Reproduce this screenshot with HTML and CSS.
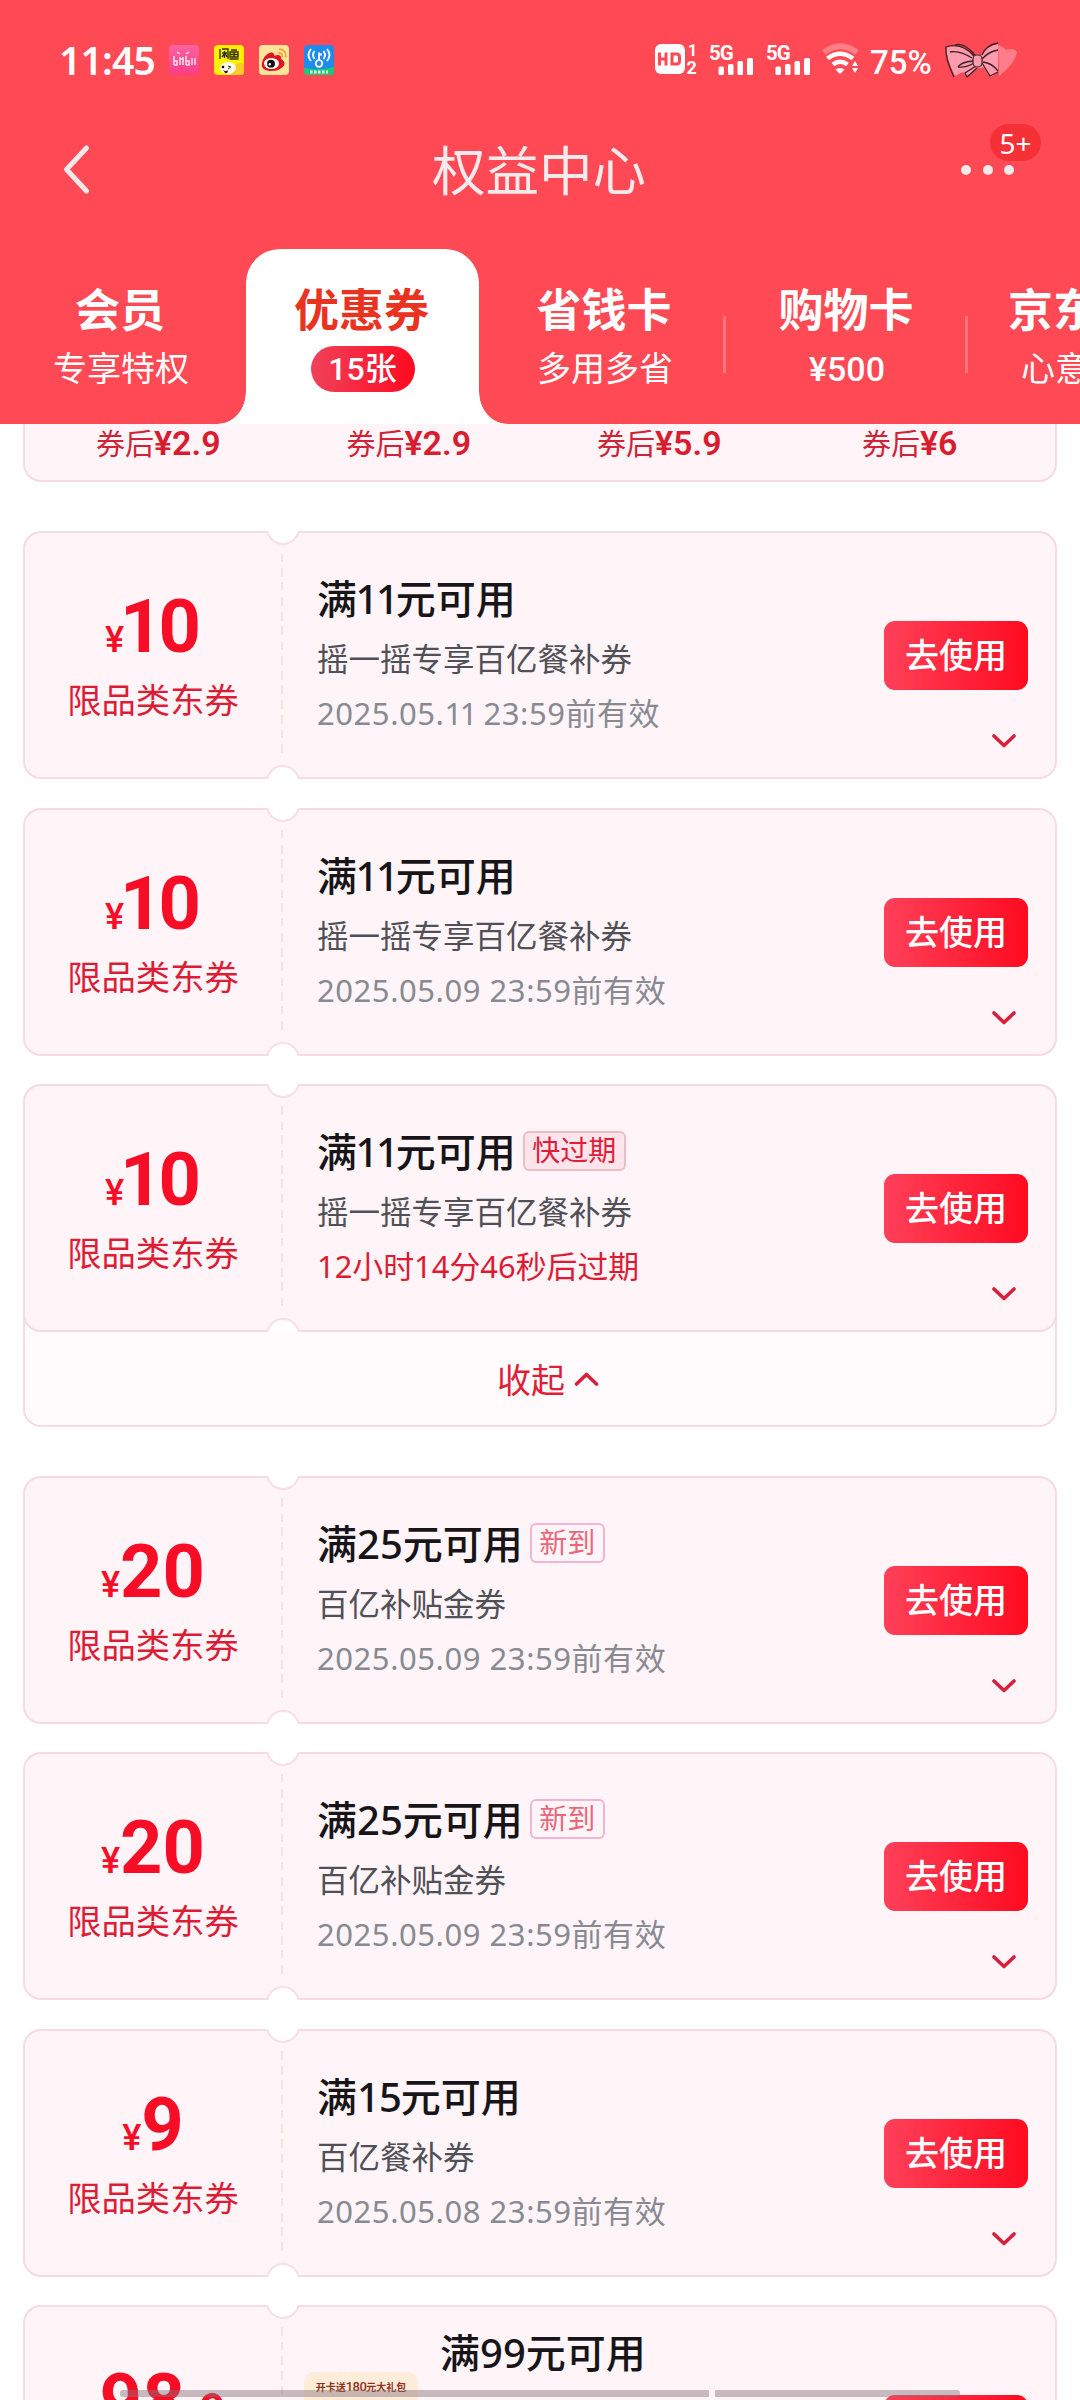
FILE: index.html
```html
<!DOCTYPE html>
<html lang="zh-CN">
<head>
<meta charset="utf-8">
<title>权益中心</title>
<link rel="stylesheet" href="styles.css">
</head>
<body>
<svg class="defs" aria-hidden="true">
  <symbol id="down" viewBox="0 0 24 14"><path d="M2 2 L12 11.5 L22 2" fill="none" stroke="#d9203a" stroke-width="3.6" stroke-linecap="round" stroke-linejoin="round"/></symbol>
  <symbol id="signal" viewBox="0 0 46 32"><g fill="#fff"><rect x="9.500" y="22.500" width="5.500" height="8.500" rx="1.500"/><rect x="19" y="20" width="5.500" height="11" rx="1.500"/><rect x="28.500" y="17" width="5.500" height="14" rx="1.500"/><rect x="38" y="14" width="6" height="17" rx="1.500"/></g></symbol>
</svg>
<div class="screen">
  <header class="header">
    <div class="status">
      <span class="time">11:45</span>
      <svg class="app" viewBox="0 0 30 30"><defs><linearGradient id="pk" x2="0" y2="1"><stop stop-color="#ff62a0"/><stop offset="1" stop-color="#ff3d83"/></linearGradient></defs><rect width="30" height="30" rx="4" fill="url(#pk)"/><path d="M5 11V20M5 16h3v4H5M11 12V20M11 14h3M14 12v8M17 11v9M17 16h3v4h-3M23 13v7M26 13v7M8 7l3 2M20 7l-3 2" stroke="#ffe3ef" stroke-width="1.500" fill="none"/></svg>
      <svg class="app" viewBox="0 0 30 30"><rect width="30" height="30" rx="4" fill="#fff000"/><path d="M17 30C18 17 30 15 30 22v4q0 4-4 4z" fill="#ffc928"/><path d="M6 4v10M8 4h6v10M8 8h5M10.500 6v7M8 12l3-4 2 4M17 5h6M16 7h8v5h-8zM20 7v5M16 9.500h8M15.500 14h9" stroke="#30300a" stroke-width="1.400" fill="none"/><ellipse cx="14" cy="23" rx="8" ry="6" fill="#fffbe8"/><circle cx="9" cy="22" r="1.300"/><path d="M14 21l3 1-3 2" stroke="#332" fill="none"/><path d="M9 25q3 2 5 0q0 4-3 3z" fill="#402010"/></svg>
      <svg class="app" viewBox="0 0 30 30"><rect width="30" height="30" rx="4" fill="#ffe49b"/><path d="M20 4.500q7-1 7 8M19 8q4-1 4.500 4" stroke="#f6a33a" stroke-width="1.800" fill="none"/><path d="M3 18c1-6 7-12 11-10 2 1 1 3 1 3 4-2 8-1 7 3 9 5-1 12-9 12S2 23 3 18z" fill="#e2151f"/><ellipse cx="12.500" cy="18.500" rx="7.500" ry="5.500" fill="#fff"/><circle cx="12" cy="18.700" r="3.900" fill="#111"/><circle cx="10.800" cy="19.300" r="1.200" fill="#fff"/></svg>
      <svg class="app" viewBox="0 0 30 30"><rect width="30" height="30" rx="4" fill="#1e8cee"/><path d="M0 23q14 3 30-1v4q0 4-4 4H4q-4 0-4-4z" fill="#20c875"/><path d="M7 4q-5 6 0 12M10.500 6q-3 4 0 8M23 4q5 6 0 12M19.500 6q3 4 0 8" stroke="#fff" stroke-width="1.900" fill="none"/><circle cx="15" cy="18.500" r="3.300" stroke="#fff" stroke-width="1.800" fill="none"/><path d="M15 15V7.500M15 9.500h3" stroke="#fff" stroke-width="1.800"/><path d="M6 27h18" stroke="#d8fbe6" stroke-width="3" stroke-dasharray="2.500 1.500"/></svg>
      <div class="indicators">
        <svg width="43" height="32" viewBox="0 0 43 32"><rect y="0" width="30" height="30" rx="6" fill="#fff"/><path d="M4.500 8.500v13M11 8.500v13M4.500 15H11M17 10v10h4.500q3 0 3-3v-4q0-3-3-3z" fill="none" stroke="#ff4954" stroke-width="3"/><text x="33" y="12" class="sim">1</text><text x="31.500" y="29.500" class="sim sim-wide">2</text></svg>
        <svg class="sig" width="46" height="32"><use href="#signal"/><text x="0" y="15.500" class="net">5G</text></svg>
        <svg class="sig" width="46" height="32"><use href="#signal"/><text x="0" y="15.500" class="net">5G</text></svg>
        <svg class="wifi" width="38" height="32" viewBox="0 0 38 32"><g fill="none" stroke="#fff"><path d="M2 8.500Q18 -4 35 8.500" stroke="#ff7f87" stroke-width="6"/><path d="M5.500 14.500Q18 5 31 14.500M11 20.500Q18 15 25.500 20.500" stroke-width="4.600"/></g><path d="M13.500 25.500q4.500-3 9 0L18 30z" fill="#fff"/><path d="M30 22l3-5 3 5zM30 24l3 5 3-5z" fill="#fff"/></svg>
        <span class="percent">75%</span>
        <svg class="bow" width="74" height="36" viewBox="0 0 74 36"><path d="M54 3Q60 5 62 8 70 5 73 10q-2 12-18 24z" fill="#ff7d88"/><path d="M2 5Q16 0 29 14q4-3 8 0Q43 4 54 2v28l-7 5-8-10q-2 2-6 1l-10 9-4-5-8 4Q2 16 2 5z" fill="#ff9bad"/><path d="M30 14Q18 0 2 5q-1 12 8 30M11 3Q20 0 31 13M6 10q9-2 22 6M14 25q3-5 15-6M14 25q8 1 16-4M32 24L21 31l2 4 10-9M38 13Q42 3 54 1M38 17q6-7 16-9M38 21l8 13 8-4M39 20q9 1 15 9" fill="none" stroke="#392029" stroke-width="1.300"/><rect x="29" y="13" width="9" height="12" rx="4" fill="#ff9bad" stroke="#392029" stroke-width="1.200"/></svg>
      </div>
    </div>
    <div class="titlebar">
      <svg class="back" width="30" height="54" viewBox="0 0 30 54"><path d="M25.500 4L5.500 25.500 25.500 47" fill="none" stroke="#f1e9e9" stroke-width="5" stroke-linecap="round" stroke-linejoin="round"/></svg>
      <h1>权益中心</h1>
      <div class="more"><i></i><i></i><i></i><span class="badge">5+</span></div>
    </div>
    <nav class="tabs">
      <div class="tab"><b>会员</b><span>专享特权</span></div>
      <div class="tab active"><b>优惠券</b><span class="pill">15张</span></div>
      <div class="tab rule"><b>省钱卡</b><span>多用多省</span></div>
      <div class="tab rule"><b>购物卡</b><span class="sum">¥500</span></div>
      <div class="tab"><b>京东E卡</b><span>心意无限</span></div>
    </nav>
  </header>
  <main class="list">
    <section class="deals">
      <div>券后<b>¥2.9</b></div><div>券后<b>¥2.9</b></div><div>券后<b>¥5.9</b></div><div>券后<b>¥6</b></div>
    </section>
    <section class="group">
      <article class="ticket">
        <div class="worth"><div class="amount"><small>¥</small><span class="one">1</span>0</div><div class="kind">限品类东券</div></div>
        <div class="info"><h2>满<span class="ones">11</span>元可用</h2><p>摇一摇专享百亿餐补券</p><time>2025.05.<span class="ones">11</span> 23:59前有效</time></div>
        <div class="action"><button>去使用</button><svg class="chev"><use href="#down"/></svg></div>
      </article>
      <article class="ticket">
        <div class="worth"><div class="amount"><small>¥</small><span class="one">1</span>0</div><div class="kind">限品类东券</div></div>
        <div class="info"><h2>满<span class="ones">11</span>元可用</h2><p>摇一摇专享百亿餐补券</p><time>2025.05.09 23:59前有效</time></div>
        <div class="action"><button>去使用</button><svg class="chev"><use href="#down"/></svg></div>
      </article>
      <div class="fold">
        <article class="ticket">
          <div class="worth"><div class="amount"><small>¥</small><span class="one">1</span>0</div><div class="kind">限品类东券</div></div>
          <div class="info"><h2>满<span class="ones">11</span>元可用<em class="tag soon">快过期</em></h2><p>摇一摇专享百亿餐补券</p><time class="urgent">12小时14分46秒后过期</time></div>
          <div class="action"><button>去使用</button><svg class="chev"><use href="#down"/></svg></div>
        </article>
        <div class="collapse">收起<svg class="up"><use href="#down"/></svg></div>
      </div>
    </section>
    <section class="group second">
      <article class="ticket">
        <div class="worth"><div class="amount"><small>¥</small>20</div><div class="kind">限品类东券</div></div>
        <div class="info"><h2>满25元可用<em class="tag">新到</em></h2><p>百亿补贴金券</p><time>2025.05.09 23:59前有效</time></div>
        <div class="action"><button>去使用</button><svg class="chev"><use href="#down"/></svg></div>
      </article>
      <article class="ticket">
        <div class="worth"><div class="amount"><small>¥</small>20</div><div class="kind">限品类东券</div></div>
        <div class="info"><h2>满25元可用<em class="tag">新到</em></h2><p>百亿补贴金券</p><time>2025.05.09 23:59前有效</time></div>
        <div class="action"><button>去使用</button><svg class="chev"><use href="#down"/></svg></div>
      </article>
      <article class="ticket">
        <div class="worth"><div class="amount"><small>¥</small>9</div><div class="kind">限品类东券</div></div>
        <div class="info"><h2>满<span class="fifteen">15</span>元可用</h2><p>百亿餐补券</p><time>2025.05.08 23:59前有效</time></div>
        <div class="action"><button>去使用</button><svg class="chev"><use href="#down"/></svg></div>
      </article>
      <article class="ticket">
        <div class="worth"><div class="amount wide"><small>¥</small>98<small class="cents">.9</small></div></div>
        <div class="gift">开卡送<b>180</b>元大礼包</div>
        <div class="info with-gift"><h2>满99元可用</h2></div>
        <div class="action"><button>去使用</button></div>
      </article>
    </section>
  </main>
  <div class="homebar"><i></i><i></i></div>
</div>
</body>
</html>
```
FILE: styles.css
```css
* { box-sizing: border-box; margin: 0; padding: 0; }
body {
  width: 1080px; height: 2400px; overflow: hidden; background: #fff;
  font-family: "Noto Sans", "Noto Sans CJK SC", sans-serif;
}
.defs { position: absolute; width: 0; height: 0; }
.screen { position: relative; width: 1080px; height: 2400px; overflow: hidden; }

.header { height: 424px; background: #ff4954; color: #fff; overflow: hidden; }
.status { height: 120px; padding: 0 62px 0 59px; display: flex; align-items: center; }
.time { width: 110px; font-size: 39px; font-weight: 600; line-height: 40px; letter-spacing: -.8px; }
.app { width: 30px; height: 30px; margin-right: 15px; flex: none; }
.indicators { margin-left: auto; display: flex; align-items: center; }
.indicators svg { flex: none; overflow: visible; }
.sim { font: 700 16px Roboto, sans-serif; fill: #fff; }
.sim-wide { font-size: 18px; }
.net { font: 700 20.5px Roboto, sans-serif; letter-spacing: -1px; fill: #fff; }
.sig { margin-left: 11px; }
.wifi { margin-left: 10px; }
.percent { width: 68px; margin-left: 10px; font: 500 33px/40px Roboto, sans-serif; padding-top: 5px; }
.bow { margin-left: 6px; }

.titlebar { height: 129px; padding: 0 66px 28px 61px; display: flex; align-items: center; justify-content: space-between; }
.titlebar h1 { font-size: 53.5px; line-height: 70px; font-weight: 400; color: #f6eaec; margin-left: 26px; }
.more { position: relative; top: -1px; display: flex; gap: 11.500px; width: 53px; }
.more i { width: 10px; height: 10px; border-radius: 50%; background: #f4eaeb; flex: none; }
.badge {
  position: absolute; left: 29px; top: -41px; width: 51px; height: 37px; border-radius: 19px;
  background: #f53036; text-align: center; font-size: 28px; line-height: 38px;
}

.tabs { height: 175px; display: flex; }
.tab {
  position: relative; flex: none; width: 242px; padding-top: 32px;
  display: flex; flex-direction: column; align-items: center;
}
.tab b { font-size: 45px; line-height: 58px; font-weight: 700; white-space: nowrap; transform: translateX(-1px); }
.tab span { font-size: 34px; line-height: 46px; margin-top: 7px; white-space: nowrap; font-family: Roboto, "Noto Sans CJK SC", sans-serif; }
.tab .sum { font-weight: 500; }
.tab.active { width: 233px; margin: 0 5px 0 4px; background: #fff; border-radius: 34px 34px 0 0; }
.tab.active::before, .tab.active::after {
  content: ""; position: absolute; bottom: 0; width: 28px; height: 32px;
}
.tab.active::before { right: 100%; background: radial-gradient(ellipse 28px 32px at 0 0, #ff4954 98%, #fff 100%); }
.tab.active::after { left: 100%; background: radial-gradient(ellipse 28px 32px at 100% 0, #ff4954 98%, #fff 100%); }
.tab.active b { color: #e9321f; }
.tab .pill {
  width: 104px; height: 46px; border-radius: 23px; text-align: center; font-size: 32px; font-weight: 500;
  background: linear-gradient(90deg, #f0415a, #ff0a20);
}
.tab.rule::after {
  content: ""; position: absolute; right: 0; top: 67px; width: 3px; height: 57px; background: #ff747d;
}

.list { padding: 0 23px; }
.deals {
  height: 58px; padding: 0 10px 0 8px; display: grid; grid-template-columns: repeat(4, 250.500px);
  background: #fff4f8; border: 2px solid #f6dbe2; border-top: 0; border-radius: 0 0 18px 18px;
  color: #cf2338; font: 29px/38px Roboto, "Noto Sans CJK SC", sans-serif; text-align: center;
}
.deals b { color: #d81d30; font-weight: 600; font-size: 34px; }

.group { margin-top: 49px; display: flex; flex-direction: column; gap: 28.600px; }
.group.second { gap: 28.300px; }
.ticket {
  position: relative; height: 248px; display: flex; overflow: hidden; border-radius: 18px;
  background: #fff4f8; box-shadow: inset 0 0 0 2px #f6dbe2;
}
.ticket::before, .ticket::after {
  content: ""; position: absolute; left: 244px; width: 30px; height: 30px; border-radius: 50%;
  background: #fff; border: 2px solid #f8dfe6;
}
.ticket::before { top: -20px; }
.ticket::after { bottom: -20px; }
.worth { width: 260px; padding-top: 59px; flex: none; text-align: center; color: #f70d26;
  background: repeating-linear-gradient(180deg, #f9e1e6 0 9px, transparent 9px 14.700px) 258px 22px / 2px 205px no-repeat;
}
.ticket::before, .ticket::after { margin-left: -1px; }
.amount { height: 74px; font: 700 74px/74px Roboto, sans-serif; white-space: nowrap; }
.amount small { font-size: 36px; font-weight: 500; line-height: 1; }
.amount .one { letter-spacing: -4px; margin-left: -4px; }
.amount.wide { letter-spacing: .5px; }
.amount.wide .cents { font-size: 46px; font-weight: 700; }
.kind { margin-top: 16px; font-size: 34.300px; line-height: 40px; color: #dc1d36; }
.info { flex: 1; padding: 41px 0 0 34px; }
.info h2 { display: flex; align-items: center; height: 54px; font-size: 40px; font-weight: 500; line-height: 54px; color: #171518; }
.info p { margin-top: 13px; font-size: 31.500px; line-height: 40px; color: #505057; }
.info time { display: block; margin-top: 14px; font-size: 31px; line-height: 40px; color: #888a92; letter-spacing: .55px; white-space: pre; }
.info .ones { letter-spacing: -2.500px; }
.info h2 .ones { margin: 0 -.5px 0 -1.500px; }
.info h2 .fifteen { letter-spacing: -1px; }
.info .urgent { color: #dd1c34; letter-spacing: 0; font-size: 30.900px; }
.tag {
  height: 40px; margin: -3px 0 0 7px; padding: 0 7.500px; border: 2px solid #f5b4cd; border-radius: 6px;
  font-size: 28px; font-style: normal; font-weight: 400; line-height: 35px; color: #ea6678;
}
.tag.soon { background: #ffe4eb; border-color: #eebdc6; color: #e01e39; }
.action { width: 145px; margin-right: 29px; padding-top: 90px; flex: none; display: flex; flex-direction: column; align-items: flex-end; }
.action button {
  width: 144px; height: 69px; border: 0; border-radius: 11px; color: #fff;
  background: linear-gradient(90deg, #ff4059, #ff0b20); font: 500 34px/67px "Noto Sans", "Noto Sans CJK SC", sans-serif;
}
.chev { width: 24px; height: 14px; margin: 44px 12px 0 0; }
.fold { border-radius: 18px; background: #fffafc; box-shadow: inset 0 0 0 2px #f6dbe2; }
.collapse { height: 95px; padding: 0 0 2px 16px; display: flex; align-items: center; justify-content: center; gap: 9px; font-size: 34px; color: #e01e37; }
.up { width: 25px; height: 14px; transform: rotate(180deg); }

.gift {
  width: 114px; height: 114px; margin: 67px 0 0 21px; flex: none; border-radius: 10px; background: #ffedda;
  color: #91301c; font-size: 10px; font-weight: 600; line-height: 30px; text-align: center; white-space: nowrap;
}
.gift b { font-size: 13px; font-weight: 500; letter-spacing: -.5px; font-family: Roboto, sans-serif; }
.info.with-gift { padding: 21px 0 0 22px; }

.homebar { position: absolute; left: 120px; top: 2390px; display: flex; gap: 6px; }
.homebar i { width: 589px; height: 7px; border-radius: 3px 0 0 3px; background: rgba(132, 112, 120, .45); }
.homebar i + i { width: 245px; border-radius: 0 3px 3px 0; }
```
